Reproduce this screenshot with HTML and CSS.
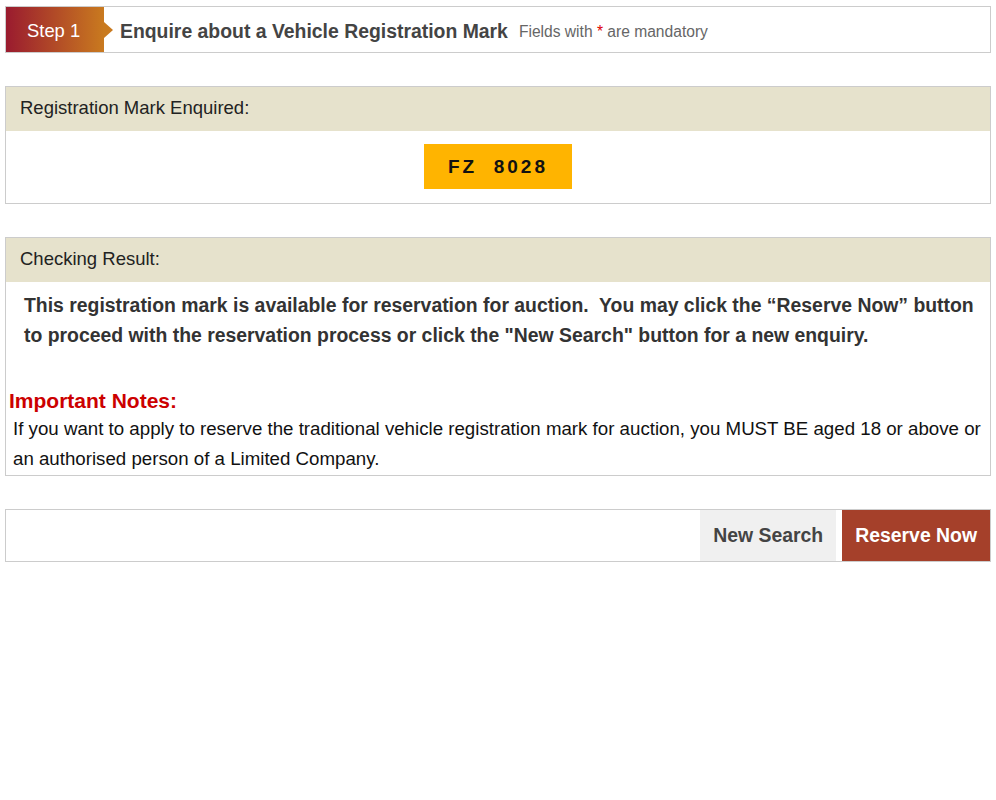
FILE: index.html
```html
<!DOCTYPE html>
<html>
<head>
    <title>Enquire about a Vehicle Registration Mark</title>
    <link rel="stylesheet" href="styles.css">
</head>
<body>
    <!-- Step header -->
    <div class="step-bar">
        <div class="step-badge">Step 1</div>
        <h1 class="step-title">Enquire about a Vehicle Registration Mark</h1>
        <span class="step-note">Fields with <span class="req">*</span> are mandatory</span>
    </div>

    <!-- Enquired mark -->
    <div class="panel">
        <div class="panel-head">Registration Mark Enquired:</div>
        <div class="panel-body plate-row">
            <div class="plate">FZ&nbsp;&nbsp;8028</div>
        </div>
    </div>

    <!-- Result -->
    <div class="panel">
        <div class="panel-head">Checking Result:</div>
        <div class="panel-body">
            <p class="result">This registration mark is available for reservation for auction.&nbsp; You may click the “Reserve Now” button to proceed with the reservation process or click the "New Search" button for a new enquiry.</p>
            <h3 class="notes-title">Important Notes:</h3>
            <p class="notes">If you want to apply to reserve the traditional vehicle registration mark for auction, you MUST BE aged 18 or above or an authorised person of a Limited Company.</p>
        </div>
    </div>

    <!-- Actions -->
    <div class="actions">
        <button class="btn btn-plain">New Search</button>
        <button class="btn btn-main">Reserve Now</button>
    </div>
</body>
</html>
```

FILE: styles.css
```css
body {
    font-family: "Liberation Sans", Arial, sans-serif;
    background-color: #fff;
    color: #222;
    margin: 0;
    padding: 6px 5px 0 5px;
}

.step-bar {
    display: flex;
    align-items: center;
    height: 45px;
    border: 1px solid #ccc;
    background-color: #fff;
    margin-bottom: 33px;
}

.step-badge {
    position: relative;
    align-self: stretch;
    width: 98px;
    display: flex;
    align-items: center;
    padding: 3px 0 0 21px;
    box-sizing: border-box;
    color: #fff;
    font-size: 18.4px;
    background: linear-gradient(to right, #9a1b2f, #c97a1f);
}

/* small arrow on the badge */
.step-badge:after {
    content: "";
    position: absolute;
    right: -9px;
    top: 50%;
    margin-top: -8px;
    border-left: 9px solid #c97a1f;
    border-top: 8px solid transparent;
    border-bottom: 8px solid transparent;
}

.step-title {
    margin: 3px 0 0 16px;
    font-size: 19.4px;
    font-weight: bold;
    color: #444;
}

.step-note {
    margin: 5px 0 0 11px;
    font-size: 15.6px;
    color: #666;
}

.req {
    color: #d00;
}

.panel {
    border: 1px solid #ccc;
    margin-bottom: 33px;
}

.panel-head {
    background-color: #e6e2cc;
    height: 44px;
    line-height: 42px;
    padding-left: 14px;
    font-size: 18.5px;
    color: #222;
}

.plate-row {
    display: flex;
    justify-content: center;
    padding: 13px 0 14px 0;
}

.plate {
    background-color: #ffb400;
    width: 148px;
    height: 45px;
    line-height: 45px;
    text-align: center;
    font-weight: bold;
    font-size: 19px;
    letter-spacing: 3px;
    color: #111;
}

.result {
    margin: 8px 10px 0 18px;
    font-size: 19.4px;
    font-weight: bold;
    line-height: 30px;
    color: #333;
}

.notes-title {
    margin: 38px 0 0 3px;
    font-size: 21px;
    color: #c00;
    line-height: 26px;
}

.notes {
    margin: 0 0 0 7px;
    font-size: 18.7px;
    line-height: 30px;
    color: #111;
    padding-bottom: 1px;
}

.actions {
    display: flex;
    justify-content: flex-end;
    gap: 6px;
    height: 51px;
    border: 1px solid #ccc;
}

.btn {
    border: none;
    font-family: inherit;
    font-size: 19.4px;
    font-weight: bold;
    cursor: pointer;
    padding: 0 13px;
}

.btn-plain {
    background-color: #f0f0f0;
    color: #444;
}

.btn-main {
    background-color: #a5402a;
    color: #fff;
}
```
